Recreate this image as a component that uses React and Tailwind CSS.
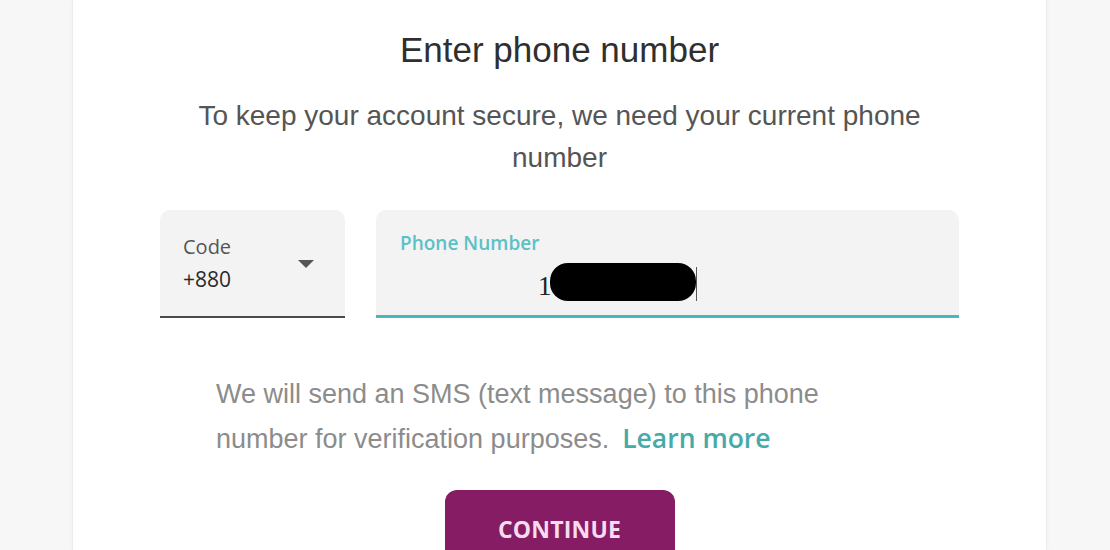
export default function App() {
  return (
    <div className="min-h-[550px] w-[1110px] overflow-hidden bg-[#f7f7f7] flex pl-[72px]">
      <div className="w-[975px] h-[550px] bg-white border-x border-[#ececec] shadow-[0_0_4px_rgba(0,0,0,0.04)] flex flex-col items-center pt-[30px] [font-family:'Liberation_Sans',Arial,sans-serif]">
        <h1 className="text-[35px] leading-[40px] text-[#2f2f2f] text-center">Enter phone number</h1>
        <p className="mt-[25px] w-[760px] text-[28px] leading-[42px] text-[#555555] text-center">
          To keep your account secure, we need your current phone number
        </p>

        <div className="mt-[31px] w-[799px] flex gap-[31px]">
          <div className="w-[185px] h-[108px] bg-[#f3f3f3] rounded-t-[10px] border-b-2 border-[#4a4a4a] flex items-center justify-between pl-[23px] pr-[30px] [font-family:'Open_Sans',sans-serif]">
            <div className="flex flex-col">
              <span className="text-[20px] leading-[32px] text-[#555555]">Code</span>
              <span className="text-[21px] leading-[32px] text-[#2a2a2a]">+880</span>
            </div>
            <svg width="18" height="10" viewBox="0 0 18 10" className="mt-[2px]">
              <path d="M1 1 L17 1 L9 9 Z" fill="#555555" />
            </svg>
          </div>
          <div className="flex-1 h-[108px] bg-[#f3f3f3] rounded-t-[10px] border-b-[3px] border-[#4cb6bd] flex flex-col pt-[22px] pl-[24px]">
            <span className="text-[19px] leading-[22px] font-semibold text-[#5cc0c6] [font-family:'Open_Sans',sans-serif]">Phone Number</span>
            <div className="mt-[8px] pl-[138px] flex items-center h-[40px]">
              <span className="text-[27px] leading-[30px] text-[#222] [font-family:'Liberation_Serif',serif] mt-[8px]">1</span>
              <span className="inline-block w-[146px] h-[38px] rounded-[18px] bg-black -ml-[2px]"></span>
              <span className="inline-block w-px h-[34px] bg-[#555] mt-[4px]"></span>
            </div>
          </div>
        </div>

        <div className="mt-[54px] w-[799px] pl-[56px] flex flex-col">
          <span className="w-[640px] text-[27px] leading-[44px] text-[#8c8c8c]">
            We will send an SMS (text message) to this phone
          </span>
          <div className="flex items-baseline gap-[13px] text-[27px] leading-[44px]">
            <span className="text-[#8c8c8c]">number for verification purposes.</span>
            <span className="text-[26.5px] font-semibold text-[#45aaa8] [font-family:'Open_Sans',sans-serif]">Learn more</span>
          </div>
        </div>

        <button className="mt-[29px] w-[230px] h-[78px] shrink-0 rounded-[12px] bg-[#861c63] text-[#f7dcef] text-[23px] font-bold tracking-[0.2px] [font-family:'Open_Sans',sans-serif]">
          CONTINUE
        </button>
      </div>
    </div>
  );
}
